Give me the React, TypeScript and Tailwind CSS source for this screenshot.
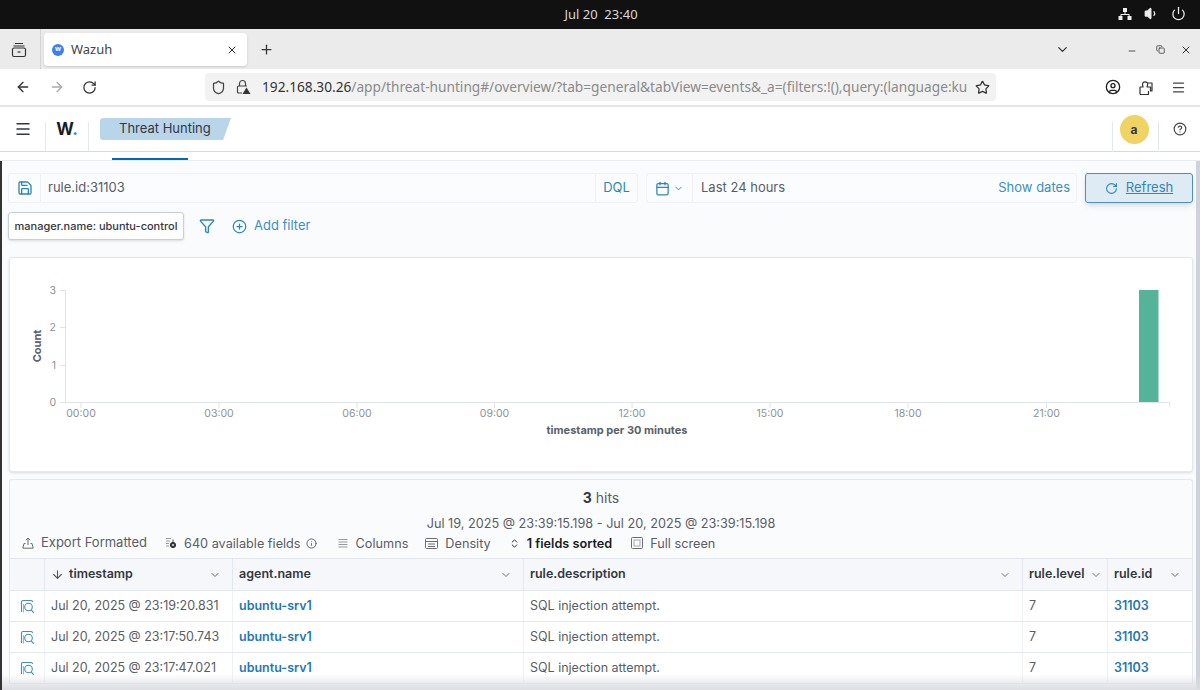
import {
  ArrowDown,
  ArrowLeft,
  ArrowRight,
  Calendar,
  ChevronDown,
  ChevronsUpDown,
  CircleHelp,
  CirclePlus,
  Copy,
  Filter,
  Info,
  Menu,
  Minus,
  Plus,
  Power,
  RotateCw,
  Save,
  Shield,
  Star,
  UserCircle,
  Volume1,
  X,
} from "lucide-react";

const rows = ["Jul 20, 2025 @ 23:19:20.831", "Jul 20, 2025 @ 23:17:50.743", "Jul 20, 2025 @ 23:17:47.021"];
const xTicks = [
  [81, "00:00"],
  [219, "03:00"],
  [357, "06:00"],
  [494.5, "09:00"],
  [632, "12:00"],
  [770, "15:00"],
  [908, "18:00"],
  [1046.5, "21:00"],
] as const;
const yTicks = [
  [290, "3"],
  [327, "2"],
  [365, "1"],
  [402, "0"],
] as const;

function TabsIcon() {
  return (
    <svg width="16" height="16" viewBox="0 0 16 16" fill="none" stroke="#333" strokeWidth="1.2">
      <path d="M4 1.5h8M2.5 4h11" />
      <rect x="1.5" y="6" width="13" height="8.5" rx="1.5" />
      <path d="M6.5 10h3" />
    </svg>
  );
}

function NetworkIcon() {
  return (
    <svg width="14" height="14" viewBox="0 0 14 14" fill="#eee">
      <rect x="5" y="1" width="4" height="4" />
      <rect x="0.5" y="9" width="4" height="4" />
      <rect x="9.5" y="9" width="4" height="4" />
      <path d="M6.5 5h1v2h4v2h-1V8h-7v1h-1V7h4z" />
    </svg>
  );
}

function LockWarningIcon() {
  return (
    <svg width="16" height="16" viewBox="0 0 16 16" fill="none" stroke="#444" strokeWidth="1.2" className="shrink-0">
      <path d="M4.5 7V4.5a3 3 0 0 1 6 0V7" />
      <path d="M7 14H3.5a1 1 0 0 1-1-1V8a1 1 0 0 1 1-1h8.5" />
      <path d="M11.5 8.5l4 6.5h-8z" fill="#333" stroke="none" />
    </svg>
  );
}

function ExtensionIcon() {
  return (
    <svg width="16" height="17" viewBox="0 0 16 17" fill="none" stroke="#333" strokeWidth="1.2" strokeLinejoin="round">
      <path d="M2 15.5V8h3L4.6 6.2A2.6 2.6 0 1 1 9.6 6L9 8h3.5V12h1.5v-8H9.5" />
      <path d="M2 15.5h8.5V12" />
    </svg>
  );
}

function DocViewIcon() {
  return (
    <svg width="15" height="15" viewBox="0 0 15 15" fill="none" stroke="#3f8fb8" strokeWidth="1.1">
      <path d="M1.5 13V3a1.5 1.5 0 0 1 1.5-1.5h8a1.5 1.5 0 0 1 1.5 1.5" />
      <path d="M3.5 13.5V5" opacity="0.6" />
      <circle cx="8.5" cy="8" r="3.8" />
      <path d="M11.2 10.8l2.6 3" />
    </svg>
  );
}

function ExportIcon() {
  return (
    <svg width="12" height="12" viewBox="0 0 12 12" fill="none" stroke="#6a6d76">
      <path d="M3.5 6.5H2L.8 11.2h10.4L10 6.5H8.5" />
      <path d="M6 8V1M3.8 3.2L6 1l2.2 2.2" />
    </svg>
  );
}

function FieldsIcon() {
  return (
    <svg width="12" height="12" viewBox="0 0 12 12" fill="none" stroke="#999">
      <path d="M1 1.5h5M1 4h4M1 6.5h3M1 9h3" />
      <circle cx="8" cy="8" r="2.6" fill="#333" stroke="#333" />
      <circle cx="8" cy="8" r="0.9" fill="#fff" stroke="none" />
      <path d="M8 2.5v2.5" stroke="#555" />
    </svg>
  );
}

function ColumnsIcon() {
  return (
    <svg width="12" height="12" viewBox="0 0 12 12" fill="none" stroke="#999">
      <path d="M1.5 2.5h9M1.5 5h9M1.5 7.5h9M1.5 10h9" />
    </svg>
  );
}

function DensityIcon() {
  return (
    <svg width="13" height="13" viewBox="0 0 13 13" fill="none" stroke="#6a6d76">
      <rect x="0.5" y="1.5" width="12" height="10" rx="1" />
      <path d="M0.5 4.5h12M3 7h7M3 9.5h7" />
    </svg>
  );
}

function FullScreenIcon() {
  return (
    <svg width="12" height="12" viewBox="0 0 12 12" fill="none" stroke="#6a6d76">
      <rect x="0.5" y="0.5" width="11" height="11" rx="1" />
      <rect x="3" y="3" width="6" height="6" stroke="#aaa" />
    </svg>
  );
}

function ToolItem({ icon, label, bold }: { icon: React.ReactNode; label: string; bold?: boolean }) {
  return (
    <div className={`flex items-center gap-[7px] ${bold ? "font-semibold text-[#1a1c21]" : ""}`}>
      {icon}
      <span>{label}</span>
    </div>
  );
}

function HeaderCell({ label, sorted, tight }: { label: string; sorted?: boolean; tight?: boolean }) {
  return (
    <div className={`flex items-center border-r border-[#e3e7ef] pl-[6px] ${tight ? "pr-[5px]" : "pr-[11px]"}`}>
      {sorted && <ArrowDown size={13} className="mr-[5px] text-[#555]" />}
      <span className="font-semibold text-[#343741]">{label}</span>
      <ChevronDown size={12} className="ml-auto text-[#69707d]" />
    </div>
  );
}

export default function App() {
  return (
    <div className="relative flex h-[690px] w-[1200px] flex-col overflow-hidden bg-[#fafbfd] font-['Inter',sans-serif]">
      {/* Ubuntu top bar */}
      <div className="relative flex h-[29px] shrink-0 items-center justify-center bg-[#111111] pl-[2px] font-['Noto_Sans',sans-serif] text-[13px] text-[#d8d8d8]">
        <span className="whitespace-pre">Jul 20  23:40</span>
        <div className="absolute right-[14px] top-[6px] flex items-center gap-[12px] text-[#eee]">
          <NetworkIcon />
          <Volume1 size={15} fill="#eee" />
          <Power size={15} />
        </div>
      </div>

      {/* Firefox tabs */}
      <div className="flex h-[40px] shrink-0 items-start bg-[#ebebeb] pl-[11px] font-['Noto_Sans',sans-serif]">
        <div className="mt-[13px]">
          <TabsIcon />
        </div>
        <div className="ml-[13px] h-[40px] border-l border-[#d4d4d4]" />
        <div className="ml-[3px] mt-[4px] flex h-[33px] w-[203px] items-center rounded-[4px] bg-white pl-[8px] pr-[9px] text-[13px] text-[#444] shadow-sm">
          <div className="flex h-[12px] w-[12px] items-center justify-center rounded-full bg-[#3f7fe8] text-[7px] font-bold text-white">w</div>
          <span className="ml-[7px]">Wazuh</span>
          <X size={12} className="ml-auto text-[#333]" />
        </div>
        <Plus size={15} className="ml-[12px] mt-[13px] text-[#333]" />
        <div className="ml-auto mr-[8px] mt-[13px] flex items-center text-[#333]">
          <ChevronDown size={15} />
          <Minus size={10} className="ml-[57px] mt-[3px]" />
          <Copy size={9} className="ml-[19px]" />
          <X size={12} className="ml-[15px]" />
        </div>
      </div>

      {/* Address bar */}
      <div className="flex h-[38px] shrink-0 items-center border-b-2 border-[#e5e5e5] bg-white pl-[15px] font-['Noto_Sans',sans-serif]">
        <ArrowLeft size={16} className="text-[#333]" />
        <ArrowRight size={16} className="ml-[18px] text-[#aaa]" />
        <RotateCw size={15} className="ml-[17px] text-[#333]" />
        <div className="ml-[108px] flex h-[28px] w-[791px] items-center rounded-[4px] bg-[#f2f2f2] pl-[6px] text-[13.7px]">
          <Shield size={15} className="shrink-0 text-[#444]" />
          <div className="ml-[9px]">
            <LockWarningIcon />
          </div>
          <div className="ml-[11px] whitespace-nowrap text-[#8a8a8a]">
            <span className="text-[#333]">192.168.30.26</span>/app/threat-hunting#/overview/?tab=general&amp;tabView=events&amp;_a=(filters:!(),query:(language:ku
          </div>
          <Star size={15} className="ml-auto mr-[6px] shrink-0 text-[#333]" />
        </div>
        <div className="ml-[109px]">
          <UserCircle size={16} className="text-[#222]" />
        </div>
        <div className="ml-[17px]">
          <ExtensionIcon />
        </div>
        <Menu size={15} className="ml-[17px] text-[#444]" />
      </div>

      {/* Wazuh header */}
      <div className="flex h-[45px] shrink-0 border-b border-[#d3dae6] bg-white">
        <div className="flex w-[45px] items-center justify-center">
          <Menu size={18} className="text-[#343741]" />
        </div>
        <div className="mt-[15px] flex w-[44px] items-start justify-center border-x border-[#e3e7ef] text-[17px] font-bold text-[#1a1c21]">
          <span className="-mt-[3px] leading-[20px]">
            W<span className="text-[#3b82f6]">.</span>
          </span>
        </div>
        <div className="ml-[11px] mt-[11px] flex h-[22px] w-[131px] items-center rounded-l-[3px] bg-[#b9d5ea] pl-[19px] text-[13px] text-[#343741] [clip-path:polygon(0_0,100%_0,94%_100%,0_100%)]">
          Threat Hunting
        </div>
        <div className="ml-auto mt-[15px] flex h-[30px] w-[47px] justify-center border-x border-[#e3e7ef] pr-[3px]">
          <div className="-mt-[7px] flex h-[29px] w-[29px] items-center justify-center rounded-full bg-[#f0d365] text-[12px] font-bold text-[#343741]">a</div>
        </div>
        <div className="flex w-[41px] items-center justify-center">
          <CircleHelp size={14} className="text-[#444]" />
        </div>
      </div>

      {/* Tab strip under the header */}
      <div className="h-[9px] shrink-0 border-b border-[#e9edf3] bg-white pl-[112px]">
        <div className="mt-[6px] h-[2px] w-[76px] bg-[#006bb4]" />
      </div>

      <div className="flex min-h-0 flex-1">
        <div className="w-[2px] shrink-0 bg-[#333]" />
        <main className="w-[1194px] shrink-0 pl-[6px] pt-[12px]">
          {/* Query bar */}
          <div className="flex h-[30px] text-[13px]">
            <div className="flex w-[33px] items-center justify-center rounded-l-[3px] border border-[#eef1f6] bg-[#fbfcfd]">
              <Save size={16} className="text-[#2d87b8]" />
            </div>
            <div className="flex w-[554px] items-center border-y border-[#eef1f6] bg-[#fbfcfd] pl-[7px] text-[#5a5d66]">rule.id:31103</div>
            <div className="flex w-[43px] items-center justify-center rounded-r-[3px] border border-[#eef1f6] bg-[#fbfcfd] text-[#2d87b8]">DQL</div>
            <div className="ml-[8px] flex w-[47px] items-center justify-center gap-[3px] rounded-l-[3px] border border-[#eef1f6] bg-[#fbfcfd]">
              <Calendar size={15} className="text-[#2d87b8]" />
              <ChevronDown size={11} className="text-[#2d87b8]" />
            </div>
            <div className="flex w-[384px] items-center justify-between rounded-r-[3px] border-y border-r border-[#eef1f6] bg-[#fbfcfd] pl-[8px] pr-[6px]">
              <span className="text-[#5a5d66]">Last 24 hours</span>
              <span className="text-[#3d8fc0]">Show dates</span>
            </div>
            <div className="ml-[8px] flex w-[108px] items-center justify-center gap-[8px] rounded-[3px] border-[1.5px] border-[#4a90b8] bg-[#dfebf4] text-[#2d87b8] shadow-md">
              <RotateCw size={13} />
              <span className="underline">Refresh</span>
            </div>
          </div>

          {/* Filter row */}
          <div className="mt-[9px] flex h-[28px] items-center text-[13px]">
            <div className="flex h-[28px] w-[176px] items-center justify-center whitespace-nowrap rounded-[3px] border border-[#c9cfd9] bg-white text-[11px] font-medium text-[#343741] shadow-sm">
              manager.name: ubuntu-control
            </div>
            <Filter size={16} className="ml-[15px] text-[#2d87b8]" />
            <CirclePlus size={15} className="ml-[17px] text-[#2d87b8]" />
            <span className="ml-[7px] text-[#3d8fc0]">Add filter</span>
          </div>

          {/* Histogram */}
          <section className="ml-[1px] mt-[17px] h-[215px] w-[1184px] rounded-[3px] border border-[#e3e7ef] bg-white shadow-sm">
            <svg width="1182" height="213" viewBox="10 258 1182 213" fontFamily="Inter, sans-serif" fontSize="10.5" fill="#8d919a">
              <path d="M65.5 290v112.5H1169.5" fill="none" stroke="#dfe3ea" />
              {yTicks.map(([y, label]) => (
                <g key={label}>
                  <path d={`M60 ${y}.5h5.5`} stroke="#dfe3ea" />
                  <text x="56" y={y + 4} textAnchor="end">
                    {label}
                  </text>
                </g>
              ))}
              {xTicks.map(([x, label]) => (
                <g key={label}>
                  <path d={`M${x} 402v6`} stroke="#dfe3ea" />
                  <text x={x} y="417" textAnchor="middle">
                    {label}
                  </text>
                </g>
              ))}
              <path d="M1169.5 402v5" stroke="#dfe3ea" />
              <rect x="1139" y="290" width="19.5" height="112" fill="#54b399" />
              <text x="41" y="346" textAnchor="middle" transform="rotate(-90 41 346)" fontWeight="700" fontSize="11" fill="#5c606b">
                Count
              </text>
              <text x="617" y="434" textAnchor="middle" fontWeight="700" fontSize="11" fill="#5c606b">
                timestamp per 30 minutes
              </text>
            </svg>
          </section>

          {/* Results */}
          <section className="ml-[1px] mt-[7px] w-[1184px] rounded-t-[3px] border-x border-t border-[#e3e7ef] text-[13px] text-[#5a5d66]">
            <div className="mt-[7px] text-center text-[14px]">
              <span className="font-bold text-[#343741]">3</span> hits
            </div>
            <div className="mt-[6px] text-center text-[12.7px]">Jul 19, 2025 @ 23:39:15.198 - Jul 20, 2025 @ 23:39:15.198</div>
            <div className="mt-[1px] flex h-[18px] items-center pl-[12px] text-[12.7px]">
              <div className="text-[13px]">
                <ToolItem icon={<ExportIcon />} label="Export Formatted" />
              </div>
              <div className="ml-[18px]">
                <ToolItem icon={<FieldsIcon />} label="640 available fields" />
              </div>
              <Info size={11} className="ml-[5px]" />
              <div className="ml-[20px]">
                <ToolItem icon={<ColumnsIcon />} label="Columns" />
              </div>
              <div className="ml-[17px]">
                <ToolItem icon={<DensityIcon />} label="Density" />
              </div>
              <div className="ml-[18px]">
                <ToolItem icon={<ChevronsUpDown size={11} />} label="1 fields sorted" bold />
              </div>
              <div className="ml-[19px]">
                <ToolItem icon={<FullScreenIcon />} label="Full screen" />
              </div>
            </div>

            <div className="mt-[6px] border-y border-[#e3e7ef] text-[12.5px]">
              <div className="grid h-[31px] grid-cols-[35px_188px_291px_499px_85px_85px] bg-[#f5f7fa]">
                <div className="border-r border-[#e3e7ef]" />
                <HeaderCell label="timestamp" sorted />
                <HeaderCell label="agent.name" />
                <HeaderCell label="rule.description" />
                <HeaderCell label="rule.level" tight />
                <HeaderCell label="rule.id" />
              </div>
              {rows.map((time) => (
                <div key={time} className="grid h-[31px] grid-cols-[35px_188px_291px_499px_85px_85px] items-center border-t border-[#e3e7ef] bg-white">
                  <div className="flex h-full items-center justify-center border-r border-[#eef1f6]">
                    <DocViewIcon />
                  </div>
                  <div className="flex h-full items-center border-r border-[#eef1f6] pl-[6px]">{time}</div>
                  <div className="flex h-full items-center border-r border-[#eef1f6] pl-[6px] font-semibold text-[#1f78b4]">ubuntu-srv1</div>
                  <div className="flex h-full items-center border-r border-[#eef1f6] pl-[6px]">SQL injection attempt.</div>
                  <div className="flex h-full items-center border-r border-[#eef1f6] pl-[6px]">7</div>
                  <div className="flex h-full items-center pl-[6px] font-semibold text-[#1f78b4]">31103</div>
                </div>
              ))}
            </div>
          </section>
        </main>
        <div className="w-[4px] shrink-0 bg-[#cfd2da]" />
      </div>

      {/* Shadow along the bottom edge of the window */}
      <div className="pointer-events-none absolute bottom-0 left-[2px] right-0 h-[16px] bg-gradient-to-b from-transparent to-[#dcdee3]" />
    </div>
  );
}
